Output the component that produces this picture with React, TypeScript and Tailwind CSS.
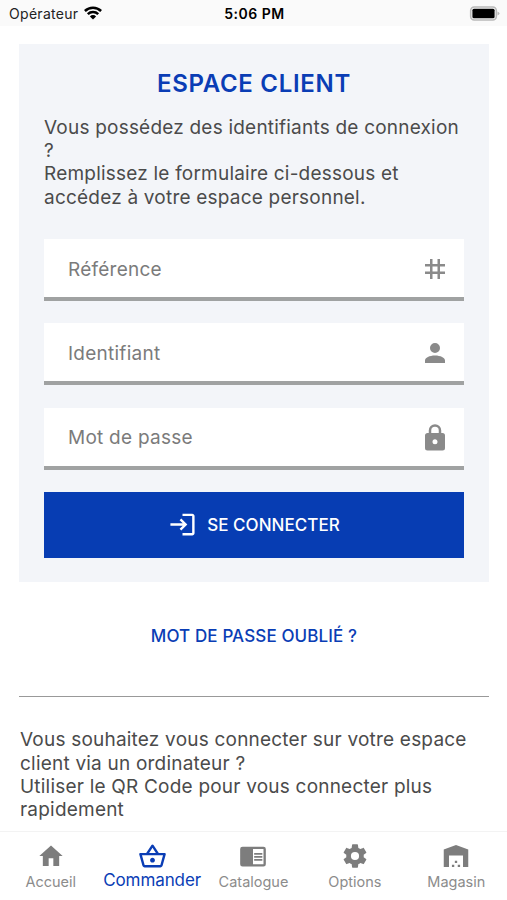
import type { ReactNode } from 'react'
import { MdLogin } from 'react-icons/md'

const icons = {
  grid: 'M10,4V8H14V4H16V8H20V10H16V14H20V16H16V20H14V16H10V20H8V16H4V14H8V10H4V8H8V4H10M14,14V10H10V14H14Z',
  account:
    'M12,4A4,4 0 0,1 16,8A4,4 0 0,1 12,12A4,4 0 0,1 8,8A4,4 0 0,1 12,4M12,14C16.42,14 20,15.79 20,18V20H4V18C4,15.79 7.58,14 12,14Z',
  lock: 'M12,17A2,2 0 0,0 14,15C14,13.89 13.1,13 12,13A2,2 0 0,0 10,15A2,2 0 0,0 12,17M18,8A2,2 0 0,1 20,10V20A2,2 0 0,1 18,22H6A2,2 0 0,1 4,20V10C4,8.89 4.9,8 6,8H7V6A5,5 0 0,1 12,1A5,5 0 0,1 17,6V8H18M12,3A3,3 0 0,0 9,6V8H15V6A3,3 0 0,0 12,3Z',
  home: 'M10,20.5V14H14V20.5H19V12H22L12,3L2,12H5V20.5H10Z',
  basket:
    'M22 9h-4.79l-4.38-6.56c-.19-.28-.51-.42-.83-.42s-.64.14-.83.43L6.79 9H2c-.55 0-1 .45-1 1 0 .09.01.18.04.27l2.54 9.27c.23.84 1 1.46 1.92 1.46h13c.92 0 1.69-.62 1.93-1.46l2.54-9.27L23 10c0-.55-.45-1-1-1zM12 4.8 14.8 9H9.2L12 4.8zM18.5 19l-12.99.01L3.31 11H20.7l-2.2 8zM12 13c-1.1 0-2 .9-2 2s.9 2 2 2 2-.9 2-2-.9-2-2-2z',
  reader:
    'M21,4H3A2,2 0 0,0 1,6V19A2,2 0 0,0 3,21H21A2,2 0 0,0 23,19V6A2,2 0 0,0 21,4M21,19H12V6H21V19M13,9.5H20V11H13V9.5M13,12H20V13.5H13V12M13,14.5H20V16H13V14.5Z',
  cog: 'M12,15.5A3.5,3.5 0 0,1 8.5,12A3.5,3.5 0 0,1 12,8.5A3.5,3.5 0 0,1 15.5,12A3.5,3.5 0 0,1 12,15.5M19.43,12.97C19.47,12.65 19.5,12.33 19.5,12C19.5,11.67 19.47,11.34 19.43,11L21.54,9.37C21.73,9.22 21.78,8.95 21.66,8.73L19.66,5.27C19.54,5.05 19.27,4.96 19.05,5.05L16.56,6.05C16.04,5.66 15.5,5.32 14.87,5.07L14.5,2.42C14.46,2.18 14.25,2 14,2H10C9.75,2 9.54,2.18 9.5,2.42L9.13,5.07C8.5,5.32 7.96,5.66 7.44,6.05L4.95,5.05C4.73,4.96 4.46,5.05 4.34,5.27L2.34,8.73C2.21,8.95 2.27,9.22 2.46,9.37L4.57,11C4.53,11.34 4.5,11.67 4.5,12C4.5,12.33 4.53,12.65 4.57,12.97L2.46,14.63C2.27,14.78 2.21,15.05 2.34,15.27L4.34,18.73C4.46,18.95 4.73,19.03 4.95,18.95L7.44,17.94C7.96,18.34 8.5,18.68 9.13,18.93L9.5,21.58C9.54,21.82 9.75,22 10,22H14C14.25,22 14.46,21.82 14.5,21.58L14.87,18.93C15.5,18.67 16.04,18.34 16.56,17.94L19.05,18.95C19.27,19.03 19.54,18.95 19.66,18.73L21.66,15.27C21.78,15.05 21.73,14.78 21.54,14.63L19.43,12.97Z',
  store: 'M1.5 6.5L12 2.5L22.5 6.5V21.5H18V11.5H6V21.5H1.5V6.5M11 16H13V18H11V16M8.5 19.5H10.5V21.5H8.5V19.5M13.5 19.5H15.5V21.5H13.5V19.5Z',
}

type IconName = keyof typeof icons

function Icon({ name, className }: { name: IconName; className: string }) {
  return (
    <svg viewBox="0 0 24 24" fill="currentColor" fillRule="evenodd" className={className}>
      <path d={icons[name]} />
    </svg>
  )
}

function StatusBar() {
  return (
    <header className="grid h-[26px] shrink-0 grid-cols-3 items-center bg-[#fafafa] pt-0.5 pr-[7px] pl-[9px] text-black">
      <div className="flex items-center gap-1.5">
        <span className="text-[14px] leading-none tracking-[0.3px] text-[#222]">Opérateur</span>
        <svg viewBox="0 0 18 14" className="-mt-0.5 h-[14px] w-[18px]">
          <g fill="none" stroke="currentColor" strokeWidth="2.5">
            <path d="M0.9 5A11.6 11.6 0 0 1 17.1 5" />
            <path d="M3.8 8.1A7.4 7.4 0 0 1 14.2 8.1" />
          </g>
          <path d="M9 13.6L5.9 10.4A4.4 4.4 0 0 1 12.1 10.4Z" fill="currentColor" />
        </svg>
      </div>
      <span className="text-center text-[14px] leading-none font-semibold tracking-[0.5px]">5:06 PM</span>
      <svg viewBox="0 0 31 15" className="-mt-0.5 h-[15px] w-[31px] justify-self-end">
        <rect x="1.7" y="1" width="25.6" height="13" rx="3.5" fill="#fafafa" stroke="#b9b9b9" strokeWidth="1.6" />
        <rect x="3.4" y="2.8" width="22.2" height="9.4" rx="1.5" fill="currentColor" />
        <path d="M28.5 5.5V9.5Q30.5 8.7 30.5 7.5Q30.5 6.3 28.5 5.5Z" fill="#b9b9b9" />
      </svg>
    </header>
  )
}

function Field({ label, icon, type = 'text' }: { label: string; icon: IconName; type?: string }) {
  return (
    <label className="flex h-[62px] items-center border-b-4 border-[#a0a2a2] bg-white pt-0.5 pr-[14px] pl-6">
      <input
        type={type}
        placeholder={label}
        className="min-w-0 flex-1 bg-transparent pt-0.5 text-[19px] tracking-[0.25px] outline-none placeholder:text-[#7b7b7b]"
      />
      <Icon name={icon} className="size-[30px] text-[#8a8a8a]" />
    </label>
  )
}

const tabs: { label: string; icon: IconName; active?: boolean }[] = [
  { label: 'Accueil', icon: 'home' },
  { label: 'Commander', icon: 'basket', active: true },
  { label: 'Catalogue', icon: 'reader' },
  { label: 'Options', icon: 'cog' },
  { label: 'Magasin', icon: 'store' },
]

function TabBar() {
  return (
    <nav className="grid h-[69px] shrink-0 grid-cols-5 border-t border-[#f3f3f3] bg-white pt-[10px]">
      {tabs.map((tab) => (
        <button
          key={tab.label}
          className={tab.active ? 'flex flex-col items-center text-[#0a3db5]' : 'flex flex-col items-center text-[#7d7d7d]'}
        >
          <Icon name={tab.icon} className={tab.active ? 'size-[29px]' : 'size-[28px]'} />
          <span
            className={
              tab.active
                ? '-mt-px text-[17px] leading-[21px] tracking-[-0.1px]'
                : 'mt-px text-[14.5px] leading-[21px] text-[#8c8c8c]'
            }
          >
            {tab.label}
          </span>
        </button>
      ))}
    </nav>
  )
}

function Paragraph({ children, className = '' }: { children: ReactNode; className?: string }) {
  return <p className={`text-[19px] leading-[23.2px] tracking-[0.21px] text-[#4b4b4b] ${className}`}>{children}</p>
}

export default function App() {
  return (
    <div className="flex h-[900px] w-[507px] flex-col overflow-hidden bg-white font-['Inter',sans-serif]">
      <StatusBar />
      <main className="min-h-0 flex-1 overflow-hidden pt-[18px] pr-[18px] pl-[19px]">
        <section className="h-[538px] bg-[#f3f5f9] px-[25px] pt-[25px]">
          <h1 className="pt-px text-center text-[24px] leading-[28px] font-semibold tracking-[0.7px] text-[#0a3db5]">
            ESPACE CLIENT
          </h1>
          <Paragraph className="mt-[18px]">
            Vous possédez des identifiants de connexion
            <br />
            ?
            <br />
            Remplissez le formulaire ci-dessous et
            <br />
            accédez à votre espace personnel.
          </Paragraph>
          <form className="mt-[30.2px] flex flex-col gap-[22.3px]" onSubmit={(e) => e.preventDefault()}>
            <Field label="Référence" icon="grid" />
            <Field label="Identifiant" icon="account" />
            <Field label="Mot de passe" icon="lock" type="password" />
            <button className="flex h-[66px] items-center justify-center gap-[10px] bg-[#073db3] text-[17px] font-medium tracking-[0.05px] text-white">
              <MdLogin className="size-[29px]" />
              <span className="pt-0.5">SE CONNECTER</span>
            </button>
          </form>
        </section>
        <button className="mx-auto mt-[42px] block text-[17px] leading-6 font-medium tracking-[0.12px] text-[#0a3db5]">
          MOT DE PASSE OUBLIÉ ?
        </button>
        <hr className="mt-[48px] border-t-[1.5px] border-[#999]" />
        <Paragraph className="mt-[31.4px] pl-px">
          Vous souhaitez vous connecter sur votre espace
          <br />
          client via un ordinateur ?
          <br />
          Utiliser le QR Code pour vous connecter plus
          <br />
          rapidement
        </Paragraph>
      </main>
      <TabBar />
    </div>
  )
}
